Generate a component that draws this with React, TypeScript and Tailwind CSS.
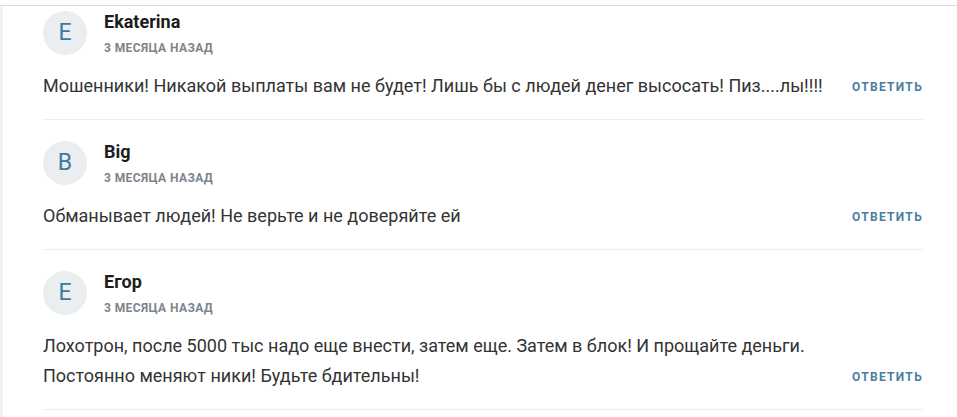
const comments = [
  {
    letter: "E",
    name: "Ekaterina",
    date: "3 месяца назад",
    text: "Мошенники! Никакой выплаты вам не будет! Лишь бы с людей денег высосать! Пиз....лы!!!!",
  },
  {
    letter: "B",
    name: "Big",
    date: "3 месяца назад",
    text: "Обманывает людей! Не верьте и не доверяйте ей",
  },
  {
    letter: "E",
    name: "Егор",
    date: "3 месяца назад",
    text: "Лохотрон, после 5000 тыс надо еще внести, затем еще. Затем в блок! И прощайте деньги. Постоянно меняют ники! Будьте бдительны!",
  },
];

function Comment({ c, first }: { c: (typeof comments)[number]; first: boolean }) {
  return (
    <div className={`${first ? "pt-[5px]" : "pt-[21px]"} pb-[18px] border-b border-[#eceef0]`}>
      <div className="flex">
        <div className="grid h-[44px] w-[44px] place-items-center rounded-full bg-[#eaeef1] text-[23px] text-[#3e7b9a]">
          {c.letter}
        </div>
        <div className="ml-[17px] flex flex-col">
          <div className="text-[18px] font-bold leading-[22px] text-[#1c1c1c]">{c.name}</div>
          <div className="mt-[8px] text-[12px] font-bold uppercase leading-[14px] tracking-[0.4px] text-[#7c858d]">
            {c.date}
          </div>
        </div>
      </div>
      <div className="mt-[16px] flex items-end gap-6">
        <p className="flex-1 text-[18px] leading-[30px] text-[#333]">{c.text}</p>
        <button className="relative top-[1px] shrink-0 text-[12px] font-bold uppercase leading-[30px] tracking-[1.3px] text-[#4a7f9c]">
          Ответить
        </button>
      </div>
    </div>
  );
}

export default function App() {
  return (
    <div className="h-[417px] w-full overflow-hidden bg-white pt-[5px] font-['Roboto',sans-serif]">
      <div className="flex h-full border-t border-[#dadada]">
        <div className="w-[3px] shrink-0 bg-[#eff3f5]" />
        <div className="flex-1 pl-[40px] pr-[34px]">
          {comments.map((c, i) => (
            <Comment key={i} c={c} first={i === 0} />
          ))}
        </div>
      </div>
    </div>
  );
}
